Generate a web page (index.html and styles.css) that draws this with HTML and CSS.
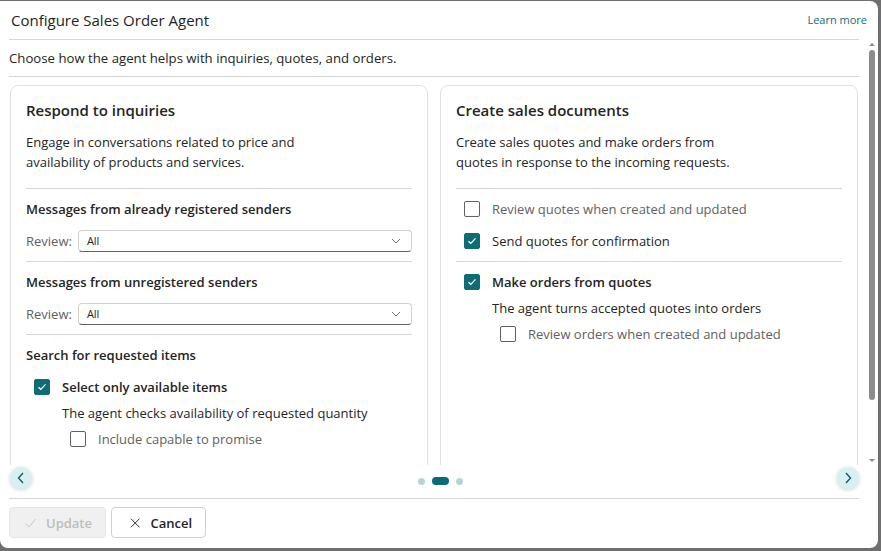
FILE: index.html
```html
<!DOCTYPE html>
<html lang="en">
<head>
    <meta charset="UTF-8">
    <title>Configure Sales Order Agent</title>
    <link rel="stylesheet" href="styles.css">
</head>
<body>
    <div class="dialog">
        <div class="header">
            <h1 class="title">Configure Sales Order Agent</h1>
            <a class="learn" href="#">Learn more</a>
        </div>

        <div class="body">
            <div class="main">
                <p class="intro">Choose how the agent helps with inquiries, quotes, and orders.</p>
                <div class="track">
                    <section class="card">
                        <h2>Respond to inquiries</h2>
                        <p class="desc">Engage in conversations related to price and<br>availability of products and services.</p>

                        <div class="group">
                            <h3>Messages from already registered senders</h3>
                            <div class="review">
                                <span class="review-label">Review:</span>
                                <div class="select">
                                    <span>All</span>
                                    <svg width="10" height="6" viewBox="0 0 10 6"><path d="M1 1l4 4 4-4" fill="none" stroke="#707070" stroke-width="1"/></svg>
                                </div>
                            </div>
                        </div>

                        <div class="group">
                            <h3>Messages from unregistered senders</h3>
                            <div class="review">
                                <span class="review-label">Review:</span>
                                <div class="select">
                                    <span>All</span>
                                    <svg width="10" height="6" viewBox="0 0 10 6"><path d="M1 1l4 4 4-4" fill="none" stroke="#707070" stroke-width="1"/></svg>
                                </div>
                            </div>
                        </div>

                        <div class="group last">
                            <h3>Search for requested items</h3>
                            <label class="check strong first">
                                <span class="box on"><svg width="10" height="8" viewBox="0 0 10 8"><path d="M1.5 4.2l2.3 2.2 4.7-5" fill="none" stroke="#fff" stroke-width="1.3"/></svg></span>
                                Select only available items
                            </label>
                            <p class="hint">The agent checks availability of requested quantity</p>
                            <label class="check muted nested">
                                <span class="box"></span>
                                Include capable to promise
                            </label>
                        </div>
                    </section>

                    <section class="card">
                        <h2>Create sales documents</h2>
                        <p class="desc">Create sales quotes and make orders from<br>quotes in response to the incoming requests.</p>

                        <div class="group">
                            <label class="check muted first">
                                <span class="box"></span>
                                Review quotes when created and updated
                            </label>
                            <label class="check">
                                <span class="box on"><svg width="10" height="8" viewBox="0 0 10 8"><path d="M1.5 4.2l2.3 2.2 4.7-5" fill="none" stroke="#fff" stroke-width="1.3"/></svg></span>
                                Send quotes for confirmation
                            </label>
                        </div>

                        <div class="group last">
                            <label class="check strong first">
                                <span class="box on"><svg width="10" height="8" viewBox="0 0 10 8"><path d="M1.5 4.2l2.3 2.2 4.7-5" fill="none" stroke="#fff" stroke-width="1.3"/></svg></span>
                                Make orders from quotes
                            </label>
                            <p class="hint">The agent turns accepted quotes into orders</p>
                            <label class="check muted nested">
                                <span class="box"></span>
                                Review orders when created and updated
                            </label>
                        </div>
                    </section>
                </div>
            </div>
            <div class="scrollbar">
                <span class="sb-up"></span>
                <span class="sb-thumb"></span>
                <span class="sb-down"></span>
            </div>
        </div>

        <div class="nav">
            <button class="arrow" aria-label="Previous">
                <svg width="10" height="12" viewBox="0 0 10 12"><path d="M7 1L2.5 6 7 11" fill="none" stroke="#115e67" stroke-width="1.4"/></svg>
            </button>
            <div class="dots">
                <span class="dot"></span>
                <span class="dot active"></span>
                <span class="dot"></span>
            </div>
            <button class="arrow" aria-label="Next">
                <svg width="10" height="12" viewBox="0 0 10 12"><path d="M3 1l4.5 5L3 11" fill="none" stroke="#115e67" stroke-width="1.4"/></svg>
            </button>
        </div>

        <div class="footer">
            <button class="btn disabled">
                <svg width="16" height="14" viewBox="0 0 16 14"><path d="M1.5 7.5l4.5 4.5 8.5-10" fill="none" stroke="#c4c4c4" stroke-width="1.2"/></svg>
                Update
            </button>
            <button class="btn">
                <svg width="12" height="12" viewBox="0 0 12 12"><path d="M1 1l10 10M11 1L1 11" fill="none" stroke="#242424" stroke-width="1.1"/></svg>
                Cancel
            </button>
        </div>
    </div>
</body>
</html>
```

FILE: styles.css
```css
* {
    box-sizing: border-box;
    margin: 0;
    padding: 0;
}
body {
    font-family: "Segoe UI", "Open Sans", sans-serif;
    background-color: #6f6f6f;
    color: #242424;
    font-size: 13px;
    line-height: 20px;
}
.dialog {
    width: 878px;
    height: 547px;
    margin-top: 1px;
    background-color: #ffffff;
    border-radius: 0 8px 8px 8px;
    display: flex;
    flex-direction: column;
    overflow: hidden;
}
.header {
    height: 38px;
    padding: 0 11px 0 11px;
    display: flex;
    align-items: center;
    justify-content: space-between;
}
.title {
    font-size: 15px;
    font-weight: 400;
}
.learn {
    font-size: 11px;
    color: #0f6c74;
    text-decoration: none;
}
.body {
    height: 426px;
    display: flex;
}
.main {
    width: 850px;
    margin-left: 9px;
    border-top: 1px solid #d6d6d6;
    display: flex;
    flex-direction: column;
}
.intro {
    height: 37px;
    line-height: 36px;
    font-size: 13.2px;
    border-bottom: 1px solid #d6d6d6;
}
.track {
    flex: 1;
    display: flex;
    gap: 12px;
    padding: 8px 0 0 1px;
    overflow: hidden;
}
.card {
    width: 418px;
    height: 420px;
    flex-shrink: 0;
    border: 1px solid #e1e1e1;
    border-radius: 8px;
    padding: 14px 15px 0 15px;
}
.card h2 {
    font-size: 15px;
    font-weight: 600;
    line-height: 20px;
    margin-bottom: 12px;
}
.desc {
    padding-bottom: 16px;
    border-bottom: 1px solid #d6d6d6;
}
.group {
    padding: 10px 0 9px;
    border-bottom: 1px solid #d6d6d6;
}
.group.last {
    border-bottom: none;
}
.group h3 {
    font-size: 13px;
    font-weight: 600;
    margin-bottom: 11px;
}
.review {
    display: flex;
    align-items: center;
    gap: 6px;
}
.review-label {
    color: #616161;
}
.select {
    flex: 1;
    height: 22px;
    border: 1px solid #d1d1d1;
    border-bottom-color: #616161;
    border-radius: 4px;
    display: flex;
    align-items: center;
    justify-content: space-between;
    padding: 0 10px 0 8px;
    font-size: 11px;
}
.check {
    display: flex;
    align-items: center;
    gap: 12px;
    height: 20px;
    margin: 12px 0 0 8px;
}
.check.first {
    margin-top: 0;
}
.group > .check:last-child {
    margin-bottom: 1px;
}
.group h3 + .check.first {
    margin-top: 12px;
}
.check.strong {
    font-weight: 600;
}
.check.muted {
    color: #616161;
}
.check.nested {
    margin: 6px 0 0 44px;
}
.box {
    width: 16px;
    height: 16px;
    border: 1px solid #616161;
    border-radius: 2px;
    display: flex;
    align-items: center;
    justify-content: center;
}
.box.on {
    background-color: #0f6c74;
    border-color: #0f6c74;
}
.hint {
    margin: 6px 0 0 36px;
}
.scrollbar {
    width: 10px;
    margin: 4px 0 3px 8px;
    display: flex;
    flex-direction: column;
    align-items: center;
}
.sb-up, .sb-down {
    width: 0;
    height: 0;
    border-left: 3px solid transparent;
    border-right: 3px solid transparent;
}
.sb-up {
    border-bottom: 3px solid #8a8a8a;
    margin-bottom: 4px;
}
.sb-down {
    border-top: 3px solid #8a8a8a;
    margin-top: auto;
}
.sb-thumb {
    width: 6px;
    height: 350px;
    border-radius: 3px;
    background-color: #8c8c8c;
}
.nav {
    height: 34px;
    margin: 0 19px 0 9px;
    padding: 2px 0 0 1px;
    border-bottom: 1px solid #d6d6d6;
    display: flex;
    align-items: flex-start;
}
.arrow {
    width: 22px;
    height: 22px;
    border: none;
    border-radius: 50%;
    background-color: #d9f0f2;
    box-shadow: 0 1px 4px rgba(0, 0, 0, 0.18);
    display: flex;
    align-items: center;
    justify-content: center;
}
.dots {
    flex: 1;
    display: flex;
    justify-content: center;
    align-items: center;
    gap: 7px;
    padding: 10px 0 0 11px;
}
.dot {
    width: 7px;
    height: 7px;
    border-radius: 50%;
    background-color: #b4d3d9;
}
.dot.active {
    width: 17px;
    height: 8px;
    border-radius: 4px;
    background-color: #0b6a76;
}
.footer {
    padding: 8px 9px 0;
    display: flex;
    gap: 5px;
}
.btn {
    height: 31px;
    padding: 0 13px 0 14px;
    font-family: inherit;
    font-size: 13px;
    font-weight: 600;
    color: #242424;
    background-color: #ffffff;
    border: 1px solid #d1d1d1;
    border-radius: 4px;
    display: flex;
    align-items: center;
    gap: 10px;
}
.btn.disabled {
    width: 97px;
    color: #bdbdbd;
    background-color: #f0f0f0;
    border-color: #e6e6e6;
    gap: 9px;
}
.btn:not(.disabled) {
    width: 95px;
    padding-left: 18px;
}
```
